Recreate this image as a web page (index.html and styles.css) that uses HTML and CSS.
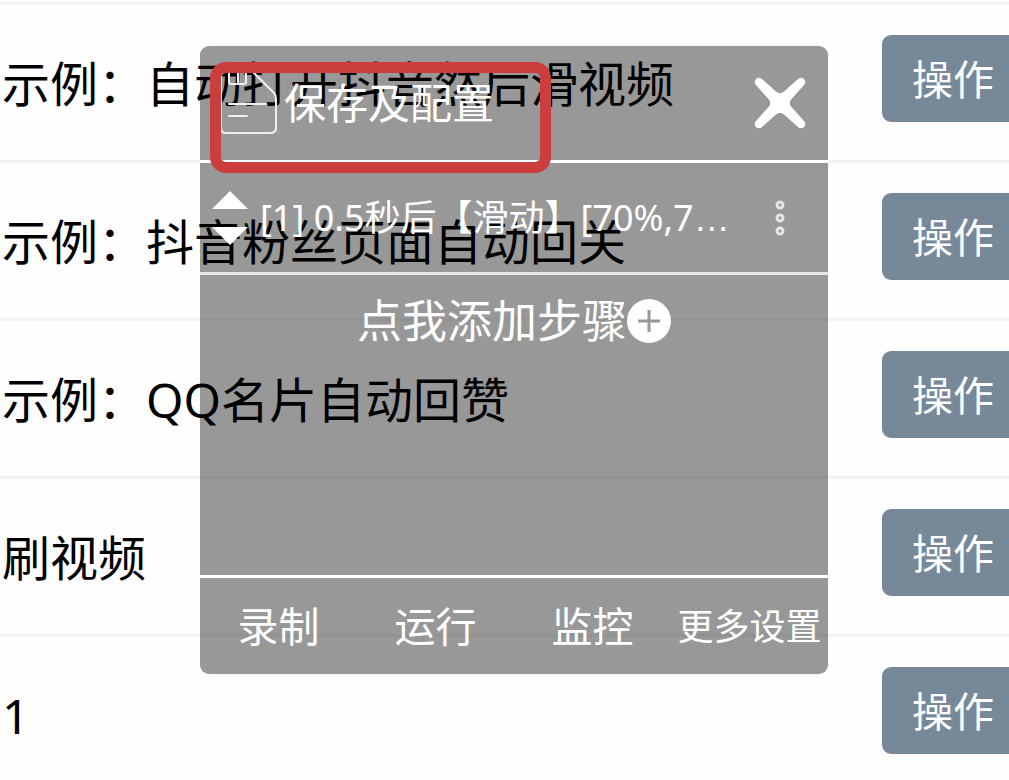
FILE: index.html
```html
<!DOCTYPE html>
<html lang="zh-CN">
<head>
<meta charset="utf-8">
<meta name="viewport" content="width=device-width, initial-scale=1">
<title>保存及配置</title>
<link rel="stylesheet" href="styles.css">
</head>
<body>
<main class="page">
  <ul class="scripts">
    <li class="script"><span class="script-name">示例：自动打开抖音然后滑视频</span><button class="action" type="button">操作</button></li>
    <li class="script"><span class="script-name">示例：抖音粉丝页面自动回关</span><button class="action" type="button">操作</button></li>
    <li class="script"><span class="script-name">示例：QQ名片自动回赞</span><button class="action" type="button">操作</button></li>
    <li class="script"><span class="script-name">刷视频</span><button class="action" type="button">操作</button></li>
    <li class="script"><span class="script-name">1</span><button class="action" type="button">操作</button></li>
  </ul>

  <section class="panel" aria-label="脚本步骤">
    <header class="panel-head">
      <button class="save" type="button">
        <svg class="save-icon" width="58" height="64" viewBox="0 0 58 64" fill="none" stroke="#f0f0f0" stroke-width="2" stroke-linecap="round" stroke-linejoin="round" aria-hidden="true">
          <path d="M6 1H33L54 22Q56 24 56 28V57Q56 62 50 62H6Q1 62 1 57V6Q1 1 6 1Z"/>
          <path d="M9 1V11Q9 13 11 13H24Q26 13 26 11V1M18 1V12"/>
          <path d="M9 33H46M9 45H27"/>
        </svg>
        <span>保存及配置</span>
      </button>
      <button class="close" type="button" aria-label="关闭">
        <svg width="54" height="54" viewBox="0 0 54 54" aria-hidden="true">
          <path fill="#fff" d="M3 9A4 4 0 0 1 9 3L23 15.500Q27 19 31 15.500L45 3A4 4 0 0 1 51 9L38.500 23Q35 27 38.500 31L51 45A4 4 0 0 1 45 51L31 38.500Q27 35 23 38.500L9 51A4 4 0 0 1 3 45L15.500 31Q19 27 15.500 23Z"/>
        </svg>
      </button>
    </header>

    <div class="step">
      <button class="sort" type="button" aria-label="调整顺序">
        <svg width="36" height="54" viewBox="0 0 36 54" fill="#fff" aria-hidden="true">
          <path d="M18 0L36 18H0ZM0 36H36L18 54Z"/>
        </svg>
      </button>
      <span class="step-text">[1] 0.5秒后【滑动】[70%,7<span class="ellipsis">…</span></span>
      <button class="more" type="button" aria-label="更多">
        <svg width="12" height="36" viewBox="0 0 12 36" fill="none" stroke="#e6e6e6" stroke-width="3" aria-hidden="true">
          <circle cx="6" cy="5" r="3"/><circle cx="6" cy="18" r="3"/><circle cx="6" cy="31" r="3"/>
        </svg>
      </button>
    </div>

    <div class="panel-body">
      <button class="add" type="button">
        <span>点我添加步骤</span>
        <svg width="44" height="44" viewBox="0 0 44 44" aria-hidden="true">
          <circle cx="22" cy="22" r="22" fill="#fff"/>
          <path d="M11 22H33M22 11V33" stroke="#999" stroke-width="3"/>
        </svg>
      </button>
    </div>

    <nav class="panel-foot">
      <button class="tool" type="button">录制</button>
      <button class="tool" type="button">运行</button>
      <button class="tool" type="button">监控</button>
      <button class="tool tool-small" type="button">更多设置</button>
    </nav>

    <div class="highlight"></div>
  </section>
</main>
</body>
</html>
```

FILE: styles.css
```css
* {
  box-sizing: border-box;
}

body {
  margin: 0;
  background: #fefefe;
  color: #000;
  font-family: "Noto Sans", "Noto Sans CJK SC", sans-serif;
}

button {
  margin: 0;
  padding: 0;
  border: 0;
  background: none;
  color: #fff;
  font-family: inherit;
  cursor: pointer;
}

svg {
  display: block;
  flex: none;
}

.page {
  position: relative;
  height: 100vh;
  overflow: hidden;
  padding-top: 2px;
}

.scripts {
  margin: 0;
  padding: 0;
  list-style: none;
}

.script {
  display: flex;
  align-items: flex-start;
  justify-content: space-between;
  height: 158px;
  padding-top: 30px;
  border-top: 3px solid #f3f3f3;
}

.script-name {
  padding-left: 2px;
  font-size: 48px;
  line-height: 98px;
  white-space: nowrap;
}

.action {
  width: 127px;
  height: 87px;
  padding-left: 30px;
  border-radius: 9px 0 0 9px;
  background: #778899;
  font-size: 41px;
  line-height: 88px;
  text-align: left;
}

/* Floating editor over the script list */
.panel {
  position: absolute;
  top: 46px;
  left: 200px;
  right: 181px;
  display: flex;
  flex-direction: column;
  border-radius: 9px;
  background: rgba(0, 0, 0, 0.4);
  color: #fff;
}

.panel-head {
  display: flex;
  align-items: center;
  justify-content: space-between;
  height: 117px;
  padding: 0 21px 0 20px;
  border-bottom: 3px solid #fff;
}

.save {
  display: flex;
  align-items: center;
  gap: 6px;
  font-size: 42px;
  line-height: 60px;
}

.step {
  display: flex;
  align-items: center;
  height: 112px;
  padding: 0 42px 0 12px;
  border-bottom: 3px solid #e8e8e8;
}

.step-text {
  flex: 1;
  min-width: 0;
  margin: 0 40px 0 12px;
  padding-top: 2px;
  font-size: 36px;
  line-height: 54px;
  white-space: nowrap;
}

.ellipsis {
  font-family: "Liberation Sans", sans-serif;
}

.panel-body {
  height: 300px;
  padding-top: 16px;
}

.add {
  display: flex;
  align-items: center;
  justify-content: center;
  width: 100%;
  font-size: 45px;
  line-height: 60px;
}

.panel-foot {
  display: grid;
  grid-template-columns: repeat(4, 1fr);
  height: 99px;
  padding-bottom: 4px;
  border-top: 3px solid #fff;
}

.tool {
  font-size: 41px;
  white-space: nowrap;
}

.tool-small {
  font-size: 36px;
}

.highlight {
  position: absolute;
  top: 16px;
  left: 10px;
  width: 341px;
  height: 111px;
  border: 11px solid #cb3e3d;
  border-radius: 16px;
  pointer-events: none;
}
```
